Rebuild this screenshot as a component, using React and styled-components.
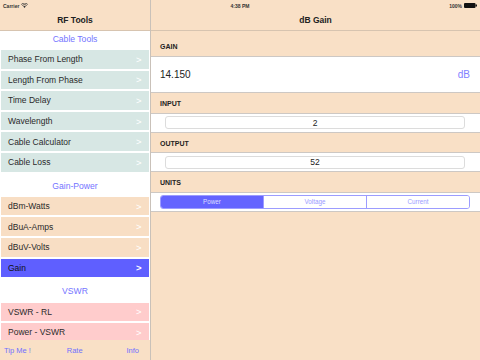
import React from "react";
import styled, { createGlobalStyle } from "styled-components";

const GlobalStyle = createGlobalStyle`
  html, body { margin: 0; padding: 0; }
  body {
    width: 480px; height: 360px; overflow: hidden;
    font-family: "Liberation Sans", Arial, sans-serif;
    background: #f9e0c6;
  }
  * { box-sizing: border-box; }
`;

const PEACH = "#f9e0c6";
const BLUE = "#5f5fff";

const Screen = styled.div`
  position: relative;
  width: 480px;
  height: 360px;
  display: flex;
  background: ${PEACH};
`;

const StatusBar = styled.div`
  position: absolute;
  top: 0; left: 0; right: 0;
  height: 11px;
  display: flex;
  align-items: center;
  justify-content: space-between;
  padding: 0 3px 0 3px;
  font-size: 5px;
  font-weight: bold;
  color: #333;
`;

const StatusGroup = styled.div`
  display: flex;
  align-items: center;
  gap: 2px;
  width: 60px;
  justify-content: ${p => p.$end ? "flex-end" : "flex-start"};
`;

const Sidebar = styled.div`
  width: 151px;
  flex: none;
  display: flex;
  flex-direction: column;
  border-right: 1px solid #c9c1b9;
`;

const NavBar = styled.div`
  height: 31px;
  flex: none;
  padding-top: 10px;
  display: flex;
  align-items: center;
  justify-content: center;
  font-size: 8.5px;
  font-weight: bold;
  color: #222;
  background: ${PEACH};
  border-bottom: 1px solid #d7c4b0;
`;

const List = styled.div`
  flex: 1;
  overflow: hidden;
  background: #fff;
  display: flex;
  flex-direction: column;
`;

const SectionTitle = styled.div`
  height: ${p => p.$first ? "17px" : "23.3px"};
  padding-top: ${p => p.$first ? "4px" : "10.2px"};
  flex: none;
  text-align: center;
  font-size: 8.6px;
  line-height: 9px;
  color: #7474ff;
`;

const Row = styled.div`
  flex: none;
  height: 18.6px;
  margin: 2px 1.5px 0 1px;
  padding: 0 7px 0 7px;
  display: flex;
  align-items: center;
  justify-content: space-between;
  font-size: 8.5px;
  color: ${p => p.$selected ? "#111" : "#2a2a2a"};
  background: ${p => p.$bg};
`;

const Chevron = styled.span`
  color: #fff;
  font-size: 9.5px;
  font-weight: ${p => p.$selected ? "bold" : "normal"};
`;

const Footer = styled.div`
  height: 20px;
  flex: none;
  background: ${PEACH};
  display: flex;
  align-items: center;
  justify-content: space-between;
  padding: 0 11px 0 4px;
  font-size: 7.5px;
  color: #7070ff;
`;

const FooterLink = styled.span`
  margin-right: ${p => p.$shift || "0"};
`;

const Detail = styled.div`
  flex: 1;
  display: flex;
  flex-direction: column;
`;

const GroupLabel = styled.div`
  height: ${p => p.$h};
  padding-top: ${p => p.$pt};
  padding-left: 9px;
  font-size: 7px;
  line-height: 8px;
  font-weight: bold;
  color: #222;
`;

const Cell = styled.div`
  height: ${p => p.$h};
  background: #fff;
  border-top: 1px solid #cdc8c4;
  border-bottom: 1px solid #cdc8c4;
  display: flex;
  align-items: center;
  padding: ${p => p.$pad};
`;

const GainValue = styled.div`
  flex: 1;
  font-size: 10px;
  color: #222;
`;

const Unit = styled.div`
  font-size: 10px;
  color: #8080ff;
`;

const Field = styled.div`
  flex: 1;
  height: 13px;
  border: 1px solid #dcdcdc;
  border-radius: 3px;
  display: flex;
  align-items: center;
  justify-content: center;
  font-size: 8.5px;
  color: #222;
`;

const Segmented = styled.div`
  flex: 1;
  height: 14px;
  border: 1px solid #9c9cff;
  border-radius: 3px;
  display: flex;
  overflow: hidden;
`;

const Segment = styled.div`
  flex: 1;
  display: flex;
  align-items: center;
  justify-content: center;
  font-size: 6.3px;
  color: ${p => p.$active ? "#dedeff" : "#9a9aff"};
  background: ${p => p.$active ? "#6464ff" : "#fff"};
  & + & { border-left: 1px solid #9c9cff; }
`;

const Wifi = () => (
  <svg width="7" height="5" viewBox="0 0 14 10">
    <path d="M7 10 L4.5 7 A3.5 3.5 0 0 1 9.5 7 Z" fill="#333" />
    <path d="M2.5 5 A6.5 6.5 0 0 1 11.5 5" stroke="#333" strokeWidth="1.6" fill="none" />
    <path d="M0.5 3 A9.5 9.5 0 0 1 13.5 3" stroke="#333" strokeWidth="1.6" fill="none" />
  </svg>
);

const Battery = () => (
  <svg width="13" height="5" viewBox="0 0 13 5">
    <rect x="0" y="0" width="11.5" height="5" rx="1" fill="#111" />
    <rect x="11.5" y="1.5" width="1.5" height="2" fill="#111" />
  </svg>
);

const sections = [
  {
    title: "Cable Tools",
    bg: "#d7e7e4",
    items: ["Phase From Length", "Length From Phase", "Time Delay", "Wavelength", "Cable Calculator", "Cable Loss"],
  },
  {
    title: "Gain-Power",
    bg: "#f8dec4",
    items: ["dBm-Watts", "dBuA-Amps", "dBuV-Volts", "Gain"],
  },
  {
    title: "VSWR",
    bg: "#ffcccc",
    items: ["VSWR - RL", "Power - VSWR"],
  },
];

export default function App() {
  return (
    <>
      <GlobalStyle />
      <Screen>
        <Sidebar>
          <NavBar>RF Tools</NavBar>
          <List>
            {sections.map((s, si) => (
              <React.Fragment key={s.title}>
                <SectionTitle $first={si === 0}>{s.title}</SectionTitle>
                {s.items.map(it => {
                  const sel = it === "Gain";
                  return (
                    <Row key={it} $bg={sel ? BLUE : s.bg} $selected={sel}>
                      <span>{it}</span>
                      <Chevron $selected={sel}>&gt;</Chevron>
                    </Row>
                  );
                })}
              </React.Fragment>
            ))}
          </List>
          <Footer>
            <FooterLink>Tip Me !</FooterLink>
            <FooterLink $shift="8px">Rate</FooterLink>
            <FooterLink>Info</FooterLink>
          </Footer>
        </Sidebar>
        <Detail>
          <NavBar>dB Gain</NavBar>
          <GroupLabel $h="25px" $pt="12px">GAIN</GroupLabel>
          <Cell $h="37px" $pad="0 10px 0 9px">
            <GainValue>14.150</GainValue>
            <Unit>dB</Unit>
          </Cell>
          <GroupLabel $h="19.5px" $pt="7px">INPUT</GroupLabel>
          <Cell $h="20px" $pad="0 15px 0 14px">
            <Field>2</Field>
          </Cell>
          <GroupLabel $h="19.5px" $pt="7px">OUTPUT</GroupLabel>
          <Cell $h="20px" $pad="0 15px 0 14px">
            <Field>52</Field>
          </Cell>
          <GroupLabel $h="19.5px" $pt="7px">UNITS</GroupLabel>
          <Cell $h="20px" $pad="0 10px 0 9px">
            <Segmented>
              <Segment $active>Power</Segment>
              <Segment>Voltage</Segment>
              <Segment>Current</Segment>
            </Segmented>
          </Cell>
        </Detail>
        <StatusBar>
          <StatusGroup>
            <span>Carrier</span>
            <Wifi />
          </StatusGroup>
          <span>4:38 PM</span>
          <StatusGroup $end>
            <span>100%</span>
            <Battery />
          </StatusGroup>
        </StatusBar>
      </Screen>
    </>
  );
}
